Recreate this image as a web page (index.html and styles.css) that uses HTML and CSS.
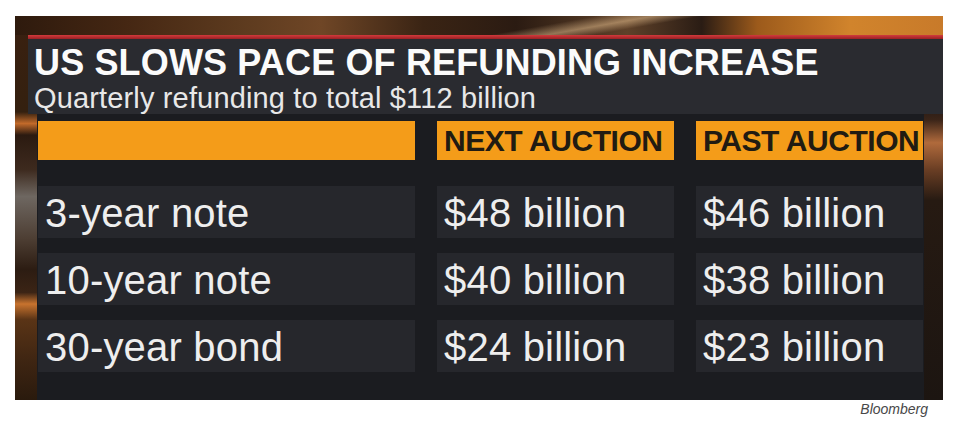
FILE: index.html
```html
<!DOCTYPE html>
<html lang="en">
<head>
<meta charset="utf-8">
<title>US slows pace of refunding increase</title>
<link rel="stylesheet" href="styles.css">
</head>
<body>
<div class="shot">
  <div class="frame">
    <div class="rule"></div>
    <div class="titlebar">
      <h1 class="title">US SLOWS PACE OF REFUNDING INCREASE</h1>
      <p class="subtitle">Quarterly refunding to total $112 billion</p>
    </div>
    <div class="table">
      <div class="head"></div>
      <div class="head">NEXT AUCTION</div>
      <div class="head">PAST AUCTION</div>

      <div class="cell">3-year note</div>
      <div class="cell">$48 billion</div>
      <div class="cell">$46 billion</div>

      <div class="cell">10-year note</div>
      <div class="cell">$40 billion</div>
      <div class="cell">$38 billion</div>

      <div class="cell">30-year bond</div>
      <div class="cell">$24 billion</div>
      <div class="cell">$23 billion</div>
    </div>
  </div>
  <p class="credit">Bloomberg</p>
</div>
</body>
</html>
```

FILE: styles.css
```css
html, body {
  margin: 0;
  padding: 0;
  background: #ffffff;
}

.shot {
  width: 966px;
  height: 421px;
  padding: 16px 0 0 15px;
  box-sizing: border-box;
  font-family: "Liberation Sans", Arial, Helvetica, sans-serif;
}

.frame {
  width: 928px;
  height: 384px;
  padding-top: 19px;
  box-sizing: border-box;
  background-color: #22170f;
  background-image:
    linear-gradient(170deg, transparent 0 40%, rgba(255, 214, 160, 0.45) 52%, transparent 62%),
    linear-gradient(to right, #2e1a0d 0, #452713 12%, #5c3a1e 24%, #6f4626 33%, #3a2414 44%, #2b1b12 54%, #5e4129 66%, #2a1c14 74%, #9c5a1b 80%, #d1842c 90%, #c87a2a 100%),
    linear-gradient(to bottom, #3a2010 0, #34200f 25%, #c26a2a 28%, #2b1a10 31%, #3d2a1e 40%, #6e6761 47%, #4d3e33 58%, #2c1c12 66%, #3b2415 72%, #c8732e 75%, #5a3416 79%, #3e2512 90%, #2a1a0d 100%),
    linear-gradient(to bottom, #1f1712 0, #1f1712 22%, #3a2418 27%, #b06a3c 33%, #6a3e24 40%, #261a12 48%, #1c1511 100%);
  background-repeat: no-repeat;
  background-size: 40% 19px, 100% 19px, 22px 100%, 19px 100%;
  background-position: 70% 0, 0 0, 0 0, 100% 0;
}

.rule {
  height: 4px;
  margin-left: 13px;
  background: linear-gradient(to bottom, #d23a3c, #9a2024);
}

.titlebar {
  height: 75px;
  margin-left: 13px;
  padding: 5px 0 0 6px;
  box-sizing: border-box;
  background: #2a2b30;
}

.title {
  margin: 0;
  font-size: 36px;
  line-height: 37px;
  font-weight: 700;
  letter-spacing: 0.15px;
  color: #fbfbfb;
  white-space: nowrap;
}

.subtitle {
  margin: 3px 0 0;
  font-size: 29px;
  line-height: 28px;
  font-weight: 400;
  letter-spacing: 0.15px;
  color: #e8e8e8;
  white-space: nowrap;
}

.table {
  width: 887px;
  height: 286px;
  margin-left: 22px;
  padding: 7px 0 0 1px;
  box-sizing: border-box;
  background: #1b1c20;
  display: grid;
  grid-template-columns: 377px 237px 227px;
  grid-template-rows: 50px 52px 52px 52px;
  column-gap: 22px;
  row-gap: 15px;
}

.head {
  align-self: start;
  height: 39px;
  padding-left: 7px;
  background: #f49c19;
  color: #211b12;
  font-size: 30px;
  line-height: 39px;
  font-weight: 700;
  letter-spacing: -0.45px;
  white-space: nowrap;
}

.cell {
  padding: 1px 0 0 7px;
  box-sizing: border-box;
  height: 52px;
  background: #26272c;
  color: #eeeeee;
  font-size: 40px;
  line-height: 52px;
  letter-spacing: 0.2px;
  white-space: nowrap;
}

.credit {
  width: 928px;
  margin: 1px 0 0;
  padding-right: 15px;
  box-sizing: border-box;
  text-align: right;
  font-size: 14px;
  line-height: 16px;
  font-style: italic;
  color: #484848;
}
```
